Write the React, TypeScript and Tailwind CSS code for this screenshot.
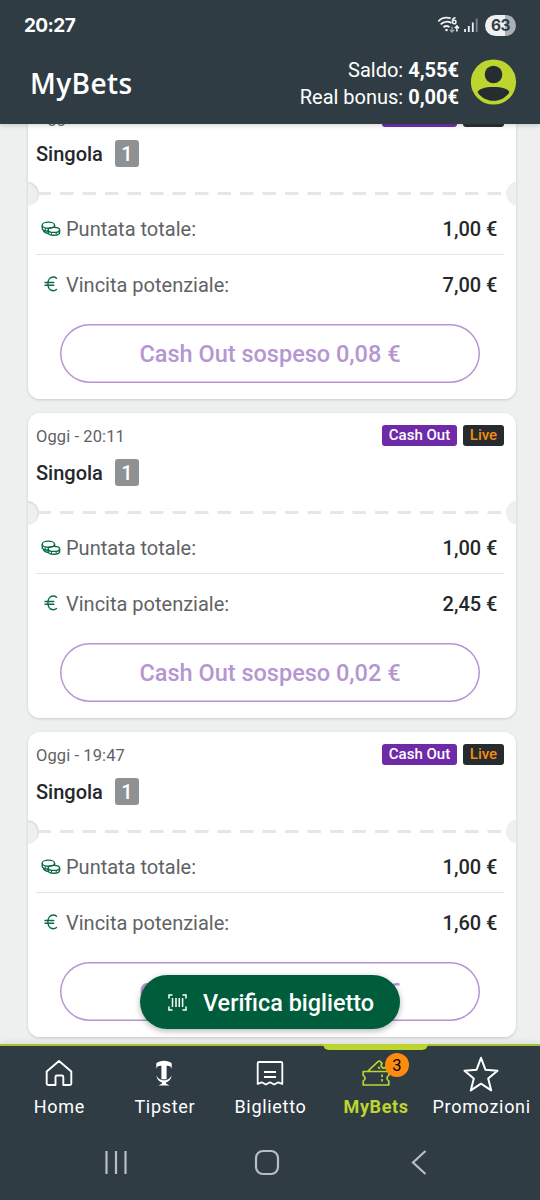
import React from "react";

type Bet = { time: string; win: string; cashOut: string };

const bets: Bet[] = [
  { time: "Oggi - 20:14", win: "7,00 €", cashOut: "0,08 €" },
  { time: "Oggi - 20:11", win: "2,45 €", cashOut: "0,02 €" },
  { time: "Oggi - 19:47", win: "1,60 €", cashOut: "0,01 €" },
];

function CoinsIcon() {
  return (
    <svg width="20" height="16" viewBox="0 0 20 16" fill="none" stroke="#0b6b42" strokeWidth="1.4">
      <ellipse cx="7.4" cy="4.2" rx="6.2" ry="3.1" />
      <path d="M1.200 4.200v3c0 1.500 2 2.800 5.800 3M13.600 4.200v2.600M2.600 9v1.200c.8 1.200 2.300 2 4.400 2.300" />
      <ellipse cx="12.900" cy="8.900" rx="5.700" ry="2.500" />
      <path d="M7.200 8.900v2.600c0 1.500 2.500 2.700 5.700 2.700s5.700-1.200 5.700-2.700V8.900" />
      <path d="M10.500 11.400v2.400M15.200 11.400v2.400M4.300 7.100v2.500" strokeWidth="1" />
    </svg>
  );
}

function EuroIcon() {
  return (
    <svg width="14" height="16" viewBox="0 0 14 16" fill="none" stroke="#0b6b42" strokeWidth="1.4" strokeLinecap="round">
      <path d="M12.500 2.200C11.700 1.400 10.500 1 9.300 1 6 1 3.900 3.900 3.900 7.800s2.100 6.900 5.400 6.900c1.200 0 2.400-.4 3.200-1.200M1 6.500h8.800M1 9.300h8.800" />
    </svg>
  );
}

function BetCard({ bet }: { bet: Bet }) {
  return (
    <article className="relative h-[305px] w-[488px] shrink-0 overflow-hidden rounded-xl bg-white">
      <div className="flex h-[34px] items-end justify-between pr-3 pl-2">
        <span className="text-[16.500px] leading-[20px] tracking-[0.1px] text-[#5f6265]">{bet.time}</span>
        <div className="mb-[1px] flex gap-[6px] text-[15px] leading-[21px] font-medium">
          <span className="h-[21px] w-[75px] rounded-[3px] bg-[#6f2aa8] text-center text-white">Cash Out</span>
          <span className="h-[21px] w-[41px] rounded-[3px] bg-[#252b2f] text-center text-[#f78c0c]">Live</span>
        </div>
      </div>
      <div className="mt-[11px] flex h-[28px] items-center gap-3 pl-2">
        <span className="w-[67px] pt-[2px] text-[20px] font-medium whitespace-nowrap text-[#24282b]">Singola</span>
        <span className="h-[27px] w-6 rounded-[3px] bg-[#8f9295] text-center text-[20px] leading-[28px] font-medium text-white">1</span>
      </div>
      <div className="mt-[14px] flex h-[25px] items-center">
        <span className="-ml-[13px] h-[24px] w-[24px] shrink-0 rounded-full bg-[#eef0f0] shadow-[inset_-1px_1px_1.500px_#d9dbdb]" />
        <svg className="shrink-0" width="467" height="3" viewBox="0 0 467 3">
          <line x1="-1.500" x2="463" y1="1.500" y2="1.500" stroke="#e6e6e6" strokeWidth="3" strokeDasharray="13.500 9" />
        </svg>
        <span className="h-[25px] w-[25px] shrink-0 rounded-full bg-[#eef0f0]" />
      </div>
      <div className="mr-3 ml-2 flex h-[49px] items-center border-b border-[#e2e4e5] pr-[6.500px] pb-[2px] pl-[5px]">
        <span className="-mt-[1px] flex w-[25px]"><CoinsIcon /></span>
        <span className="flex-1 text-[20px] text-[#606366]">Puntata totale:</span>
        <span className="text-[20px] font-medium text-[#24282b]">1,00 €</span>
      </div>
      <div className="mr-3 ml-2 flex h-[58px] items-center pt-[1px] pr-[6.500px] pl-[7.500px]">
        <span className="-mt-[2px] flex w-[22.500px]"><EuroIcon /></span>
        <span className="flex-1 text-[20px] text-[#606366]">Vincita potenziale:</span>
        <span className="text-[20px] font-medium text-[#24282b]">{bet.win}</span>
      </div>
      <button className="mt-[11px] ml-8 flex h-[58.500px] w-[420px] items-center justify-center rounded-full pt-[3.500px] text-[23.500px] font-medium whitespace-nowrap text-[#b596d2] shadow-[inset_0_0_0_1.500px_#b596d2]">
        Cash Out sospeso {bet.cashOut}
      </button>
    </article>
  );
}

function StatusBar() {
  return (
    <div className="flex h-[50px] items-center justify-between pr-6 pl-6 text-white">
      <span className="pt-[2px] font-['Inter'] text-[19px] font-bold tracking-[-0.600px]">20:27</span>
      <div className="flex items-center">
        <svg width="42" height="22" viewBox="0 0 42 22" fill="none" stroke="#eef2f4" strokeWidth="1.800">
          <path d="M.2 7.300C3.700 3.900 8.700 3.100 12.700 4.400M2.700 10.300c3-2.900 7.500-3.300 10.700-1.300M5.400 13.200c1.800-1.500 4.200-1.500 6.100-.1" />
          <circle cx="8.500" cy="16" r="1.300" fill="#eef2f4" stroke="none" />
          <path d="M17.600 3.700c-2-.1-3.300 1.700-3.200 3.900 0 1.500.8 2.200 1.800 2.200s1.800-.8 1.800-1.800-.7-1.700-1.700-1.700c-.8 0-1.500.5-1.900 1.200" strokeWidth="1.500" />
          <path d="M14 12.500v5.300m-2.200-2 2.200 2.200 2.200-2.200" stroke="#9ba4aa" strokeWidth="1.300" />
          <path d="M18.900 17.500v-5.500m-2.100 2.300 2.100-2.300 2.100 2.300" strokeWidth="1.600" />
          <path d="M27 18v-3M30.800 18v-6M34.800 18V8.500" strokeWidth="1.800" />
          <path d="M38.700 18V4.500" stroke="#7c868c" strokeWidth="1.800" />
        </svg>
        <span className="ml-[5px] h-[21px] w-[31px] rounded-full bg-[linear-gradient(90deg,#eef0f1_63%,#aab0b4_63%)] text-center font-['Inter'] text-[15.500px] leading-[21px] font-bold tracking-[-0.5px] text-[#303c44]">63</span>
      </div>
    </div>
  );
}

function Header() {
  return (
    <header className="relative z-10 h-[124px] w-full shrink-0 bg-[#303c44] shadow-[0_1px_5px_rgba(48,60,68,0.25)]">
      <StatusBar />
      <div className="flex h-[66px] items-center pr-[23.500px] pl-[30px] text-white">
        <h1 className="flex-1 font-['Open_Sans'] text-[28px] font-semibold tracking-[0.400px]">MyBets</h1>
        <div className="mr-[11.500px] pt-[1px] text-right text-[20px] leading-[27px]">
          <div>Saldo: <b>4,55€</b></div>
          <div>Real bonus: <b>0,00€</b></div>
        </div>
        <svg className="-mt-[2px]" width="46" height="46" viewBox="0 0 46 46">
          <circle cx="22.500" cy="23" r="22.600" fill="#bdd52f" />
          <circle cx="22.500" cy="15.500" r="8.800" fill="#262d31" />
          <path d="M6.700 33.500c0-3.500 7.500-5.500 15.800-5.500s15.800 2 15.800 5.500C34.500 38.800 29 41.800 22.500 41.800S10.500 38.800 6.700 33.500Z" fill="#262d31" />
        </svg>
      </div>
    </header>
  );
}

const tabs: { label: string; icon: React.ReactNode; active?: boolean }[] = [
  {
    label: "Home",
    icon: <path d="M5.700 14.500 18 4l12.300 10.500v12q0 1.500-1.500 1.500h-6.500v-8q0-1.500-1.500-1.500h-4.800q-1.500 0-1.500 1.500v8H7.200q-1.500 0-1.500-1.500Z" strokeWidth="1.900" />,
  },
  {
    label: "Tipster",
    icon: (
      <g fill="white" stroke="none">
        <path d="M10.300 6.200c3.600-3.400 11.800-3.400 15.400 0v5.600c-.6-1.700-1.700-3-4.200-3h-.9v13.500h-5.200V8.800h-.9c-2.500 0-3.600 1.300-4.200 3Z" />
        <path d="M10.300 18c1.300 3.700 4.300 5.200 7.700 5.200s6.400-1.500 7.700-5.200c-.4 4.200-2.600 6.500-5.700 7.400v1.200l3.500 1.900h-11l3.500-1.900v-1.200c-3.100-.9-5.300-3.200-5.700-7.400Z" />
      </g>
    ),
  },
  {
    label: "Biglietto",
    icon: <path d="M5.700 27V6.300q0-1.300 1.300-1.300h22q1.300 0 1.300 1.300V27l-4-1.700-4.100 2.200-4.200-2.200-4.100 2.200-4.200-2.200ZM12 15h12M12 20h12" strokeWidth="1.800" />,
  },
  {
    label: "MyBets",
    active: true,
    icon: (
      <g stroke="#bdd52f" strokeWidth="1.700">
        <path d="M5.200 14.500h25.600v4a3 3 0 0 0 0 5.500v4H5.200v-4a3 3 0 0 0 0-5.500ZM10 14 20 4.700q1.300-1.200 2.500 0l1.500 1.700a2.700 2.700 0 0 0 3.600 4l3 3.500" />
        <path d="M24 17.500v8.500M20 10l3.500 3" strokeDasharray="2.500 2" />
      </g>
    ),
  },
  {
    label: "Promozioni",
    icon: <path d="m18 0.800 4.500 12 12 .9-9.300 7.700 3 12L18 26.700l-10.200 6.700 3-12L1.500 13.700l12-.9Z" strokeWidth="2" />,
  },
];

function TabBar() {
  return (
    <nav className="relative z-10 h-[156px] w-full shrink-0 bg-[#303c44] shadow-[0_-3px_6px_rgba(0,0,0,0.06)]">
      <div className="flex h-[82px] border-t-2 border-[#a9c12d] px-[6px]">
        {tabs.map((tab) => (
          <div key={tab.label} className="relative flex w-[105.600px] flex-col items-center">
            {tab.active && <span className="absolute -top-[2px] h-[6px] w-full rounded-b-[6px] bg-[#bdd52f]" />}
            <svg className="mt-[11px] shrink-0 overflow-visible" width="36" height="36" viewBox="0 0 36 36" fill="none" stroke="white" strokeLinejoin="round">
              {tab.icon}
            </svg>
            {tab.active && (
              <span className="absolute top-[7px] left-[62px] h-6 w-6 rounded-full bg-[#fd8b0d] text-center text-[16.500px] leading-[25px] text-black">3</span>
            )}
            <span className={tab.active ? "ml-[1px] text-[18px] leading-7 font-bold tracking-[0.6px] text-[#bdd52f]" : "ml-[1px] text-[18px] leading-7 tracking-[0.700px] text-white"}>
              {tab.label}
            </span>
          </div>
        ))}
      </div>
      <svg className="mt-[18px] ml-[90px]" width="350" height="36" viewBox="0 0 350 36" fill="none" stroke="#b9bec3" strokeWidth="2.200">
        <path d="M16.500 7v23M26 7v23M35.500 7v23" />
        <rect x="166" y="7" width="22" height="23" rx="7" />
        <path d="m335.500 7-12.500 11.500L335.500 30" />
      </svg>
    </nav>
  );
}

export default function App() {
  return (
    <div className="relative flex h-[1200px] w-[540px] flex-col overflow-hidden bg-[#eef0f0] font-['Roboto',sans-serif]">
      <Header />
      <main className="flex h-[920px] flex-col overflow-visible">
        <div className="-mt-[30px] ml-[28px] flex flex-col gap-[14px]">
          {bets.map((bet) => (
            <div key={bet.time} className="w-[488px] rounded-xl shadow-[0_1px_3px_rgba(0,0,0,0.16)]">
              <BetCard bet={bet} />
            </div>
          ))}
        </div>
      </main>
      <TabBar />
      <button className="absolute top-[975px] left-[140px] z-10 flex h-[54px] w-[260px] items-center rounded-full bg-[#005d3b] pt-[3px] pl-[28px] text-[23.400px] font-medium whitespace-nowrap text-white shadow-[0_2px_6px_rgba(0,0,0,0.3)]">
        <svg className="-mt-[3px] mr-[16px] shrink-0" width="19" height="17" viewBox="0 0 19 17" fill="none" stroke="white" strokeWidth="1.500">
          <path d="M4.500 1H1v3.500M14.500 1H18v3.500M4.500 16H1v-3.500M14.500 16H18v-3.500M4.500 4v9M8 4v9M11.300 4v9M14.600 4v9" />
        </svg>
        Verifica biglietto
      </button>
    </div>
  );
}
